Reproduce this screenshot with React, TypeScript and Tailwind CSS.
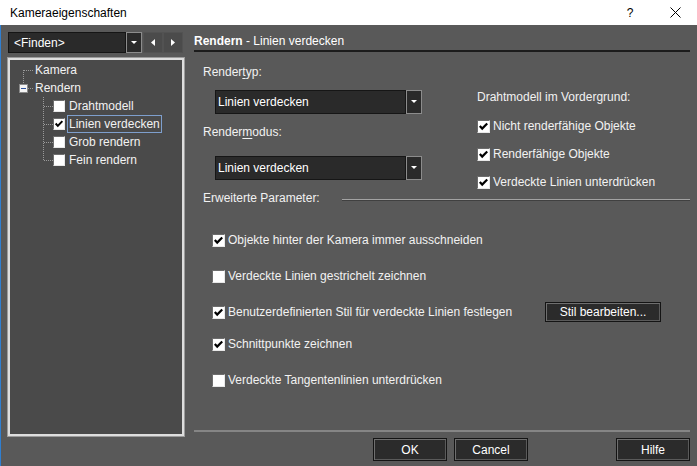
import type { ReactNode } from 'react'

const FONT = "font-['Liberation_Sans','Noto_Sans',sans-serif]"

function Check({ checked, size = 13 }: { checked?: boolean; size?: number }) {
  return (
    <span
      className="box-border flex shrink-0 items-center justify-center border border-t-[#6d6d6d] border-l-[#6d6d6d] border-r-[#e8e8e8] border-b-[#e8e8e8] bg-white"
      style={{ width: size, height: size }}
    >
      {checked && (
        <svg width={size - 2} height={size - 2} viewBox="0 0 11 11">
          <path d="M1.8 5 L4.2 7.6 L9.2 2.4" fill="none" stroke="#000" strokeWidth="2.2" />
        </svg>
      )}
    </span>
  )
}

function CheckRow({ checked, children }: { checked?: boolean; children: ReactNode }) {
  return (
    <div className="flex h-[16px] items-center gap-[3px] whitespace-nowrap">
      <Check checked={checked} />
      <span>{children}</span>
    </div>
  )
}

function DownArrow() {
  return (
    <svg width="6" height="4" viewBox="0 0 6 4">
      <path d="M0 0 H6 L3 3 Z" fill="#fff" />
    </svg>
  )
}

function Combo({ value }: { value: string }) {
  return (
    <div className="flex h-[24px] w-[207px]">
      <div className="flex flex-1 items-center border border-[#161616] bg-[#2a2a2a] pl-[2px] text-white">
        {value}
      </div>
      <div className="flex w-[16px] items-center justify-center border border-[#8c8c8c] bg-[#2a2a2a]">
        <DownArrow />
      </div>
    </div>
  )
}

function Btn({ children, className = '' }: { children: ReactNode; className?: string }) {
  return (
    <div
      className={`flex items-center justify-center border border-[#141414] bg-[#2b2b2b] text-white shadow-[inset_1px_1px_0_#6f6f6f,inset_-1px_-1px_0_#5a5a5a] ${className}`}
    >
      {children}
    </div>
  )
}

function TreeRow({
  indent,
  checked,
  hasCheck,
  selected,
  children,
}: {
  indent: number
  checked?: boolean
  hasCheck?: boolean
  selected?: boolean
  children: ReactNode
}) {
  return (
    <div className="flex h-[18px] items-center" style={{ paddingLeft: indent }}>
      {hasCheck && (
        <span className="mr-[2px] flex">
          <Check checked={checked} size={12} />
        </span>
      )}
      <span
        className={`whitespace-nowrap px-[1px] leading-[16px] ${
          selected ? 'border border-[#7e9fcd]' : 'border border-transparent'
        }`}
      >
        {children}
      </span>
    </div>
  )
}

function TreeLines() {
  const dots = { stroke: '#9a9a9a', strokeWidth: 1, strokeDasharray: '1 1' }
  return (
    <svg className="absolute left-0 top-0" width="120" height="110">
      <line x1="13.5" y1="10" x2="13.5" y2="24" {...dots} />
      <line x1="14" y1="10.5" x2="24" y2="10.5" {...dots} />
      <line x1="18" y1="28.5" x2="24" y2="28.5" {...dots} />
      <rect x="9.5" y="24.5" width="8" height="8" fill="#f4f4f4" stroke="#8a8a8a" />
      <line x1="11" y1="28.5" x2="16" y2="28.5" stroke="#2a4f9c" strokeWidth="1" />
      <line x1="33.5" y1="37" x2="33.5" y2="100" {...dots} />
      {[46, 64, 82, 100].map((y) => (
        <line key={y} x1="34" y1={y + 0.5} x2="43" y2={y + 0.5} {...dots} />
      ))}
    </svg>
  )
}

export default function App() {
  return (
    <div className={`flex h-[466px] w-[697px] flex-col overflow-hidden text-[12px] ${FONT}`}>
      {/* title bar */}
      <div className="flex h-[25px] items-center bg-white text-black">
        <span className="pl-[10px]">Kameraeigenschaften</span>
        <span className="ml-auto w-[20px] text-center">?</span>
        <span className="ml-[23px] mr-[10px] flex w-[24px] justify-center">
          <svg width="11" height="11" viewBox="0 0 11 11">
            <path d="M0.5 0.5 L10.5 10.5 M10.5 0.5 L0.5 10.5" stroke="#000" strokeWidth="1" />
          </svg>
        </span>
      </div>

      <div className="flex flex-1 border-l border-[#2f7fd1] bg-[#595959] text-[#f2f2f2]">
        {/* left column */}
        <div className="flex w-[183px] shrink-0 flex-col pl-[7px] pt-[7px]">
          <div className="flex h-[21px]">
            <div className="flex w-[134px]">
              <div className="flex flex-1 items-center border border-[#151515] bg-[#2a2a2a] pl-[5px] text-white">
                &lt;Finden&gt;
              </div>
              <div className="flex w-[16px] items-center justify-center border border-[#8c8c8c] bg-[#2a2a2a]">
                <DownArrow />
              </div>
            </div>
            <div className="ml-[1px] flex w-[20px] items-center justify-center border border-[#525252] bg-[#4b4b4b]">
              <svg width="4" height="7" viewBox="0 0 4 7">
                <path d="M4 0 V7 L0 3.5 Z" fill="#fff" />
              </svg>
            </div>
            <div className="flex w-[20px] items-center justify-center border border-[#525252] bg-[#4b4b4b]">
              <svg width="4" height="7" viewBox="0 0 4 7">
                <path d="M0 0 V7 L4 3.5 Z" fill="#fff" />
              </svg>
            </div>
          </div>

          <div className="relative mt-[5px] h-[378px] w-[176px] border-2 border-[#dedede] bg-[#4a4a4a] pt-[1px] outline outline-1 outline-[#9c9c9c]">
            <TreeLines />
            <TreeRow indent={23}>Kamera</TreeRow>
            <TreeRow indent={23}>Rendern</TreeRow>
            <TreeRow indent={43} hasCheck>
              Drahtmodell
            </TreeRow>
            <TreeRow indent={43} hasCheck checked selected>
              Linien verdecken
            </TreeRow>
            <TreeRow indent={43} hasCheck>
              Grob rendern
            </TreeRow>
            <TreeRow indent={43} hasCheck>
              Fein rendern
            </TreeRow>
          </div>
        </div>

        {/* right column */}
        <div className="ml-[10px] flex w-[496px] flex-col pt-[7px]">
          <div className="flex h-[20px] items-center border-b-2 border-[#1c1c1c] pb-[1px] text-white">
            <span className="font-bold">Rendern</span>
            <span>&nbsp;- Linien verdecken</span>
          </div>

          <div className="flex h-[138px]">
            <div className="w-[283px] pl-[9px]">
              <div className="mt-[12px] flex h-[16px] items-center">
                Render<span className="underline underline-offset-2">t</span>yp:
              </div>
              <div className="ml-[12px] mt-[10px]">
                <Combo value="Linien verdecken" />
              </div>
              <div className="mt-[10px] flex h-[16px] items-center">
                Render<span className="underline underline-offset-2">m</span>odus:
              </div>
              <div className="ml-[12px] mt-[16px]">
                <Combo value="Linien verdecken" />
              </div>
            </div>
            <div className="flex flex-col">
              <div className="mt-[37px] flex h-[16px] items-center">Drahtmodell im Vordergrund:</div>
              <div className="mt-[13px]">
                <CheckRow checked>Nicht renderfähige Objekte</CheckRow>
              </div>
              <div className="mt-[12px]">
                <CheckRow checked>Renderfähige Objekte</CheckRow>
              </div>
              <div className="mt-[12px]">
                <CheckRow checked>Verdeckte Linien unterdrücken</CheckRow>
              </div>
            </div>
          </div>

          <div className="flex h-[16px] items-center pl-[9px]">
            <span className="w-[139px]">Erweiterte Parameter:</span>
            <div className="mt-[4px] flex-1 border-t border-b border-t-[#a3a3a3] border-b-[#404040]" />
          </div>

          <div className="flex flex-1 flex-col pl-[18px]">
            <div className="mt-[26px]">
              <CheckRow checked>Objekte hinter der Kamera immer ausschneiden</CheckRow>
            </div>
            <div className="mt-[20px]">
              <CheckRow>Verdeckte Linien gestrichelt zeichnen</CheckRow>
            </div>
            <div className="mt-[18px] flex h-[20px] items-center">
              <div className="w-[333px]">
                <CheckRow checked>Benutzerdefinierten Stil für verdeckte Linien festlegen</CheckRow>
              </div>
              <Btn className="h-[20px] w-[116px]">Stil bearbeiten...</Btn>
            </div>
            <div className="mt-[14px]">
              <CheckRow checked>Schnittpunkte zeichnen</CheckRow>
            </div>
            <div className="mt-[20px]">
              <CheckRow>Verdeckte Tangentenlinien unterdrücken</CheckRow>
            </div>
          </div>

          <div className="h-[2px] bg-[#858585]" />
          <div className="mb-[5px] mt-[6px] flex h-[23px] pl-[179px]">
            <Btn className="w-[74px]">OK</Btn>
            <Btn className="ml-[7px] w-[74px]">Cancel</Btn>
            <Btn className="ml-auto w-[74px]">Hilfe</Btn>
          </div>
        </div>
      </div>
    </div>
  )
}
